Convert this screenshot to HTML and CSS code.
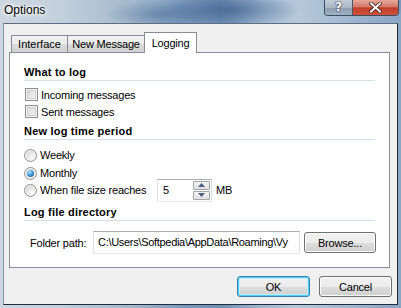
FILE: index.html
```html
<!DOCTYPE html>
<html>
<head>
<meta charset="utf-8">
<link rel="stylesheet" href="styles.css">
</head>
<body>
<div class="window">
  <div class="titlebar">
    <div class="title">Options</div>
    <div class="caption-btns">
      <div class="cbtn help">?</div>
      <div class="cbtn close">
        <svg width="13" height="11" viewBox="0 0 13 11"><path d="M2 1.5 L11 9.5 M11 1.5 L2 9.5" stroke="#3b1a1a" stroke-width="3.6" stroke-linecap="square"/><path d="M2 1.5 L11 9.5 M11 1.5 L2 9.5" stroke="#ffffff" stroke-width="2" stroke-linecap="square"/></svg>
      </div>
    </div>
  </div>
  <div class="client">
    <div class="tabs">
      <div class="tab tab-interface">Interface</div>
      <div class="tab tab-message">New Message</div>
      <div class="tab tab-logging selected">Logging</div>
    </div>
    <div class="panel">
      <div class="header h1">What to log</div>
      <div class="row chk-row first"><span class="checkbox"></span><span>Incoming messages</span></div>
      <div class="row chk-row"><span class="checkbox"></span><span>Sent messages</span></div>
      <div class="header h2">New log time period</div>
      <div class="row radio-row weekly"><span class="radio"></span><span>Weekly</span></div>
      <div class="row radio-row"><span class="radio on"></span><span>Monthly</span></div>
      <div class="row radio-row size"><span class="radio"></span><span class="size-label">When file size reaches</span>
        <div class="spin">
          <div class="spin-value">5</div>
          <div class="spin-btns">
            <div class="sbtn"><svg width="7" height="4" viewBox="0 0 7 4"><path d="M0 4 L3.5 0 L7 4 Z" fill="#4a5f85"/></svg></div>
            <div class="sbtn"><svg width="7" height="4" viewBox="0 0 7 4"><path d="M0 0 L3.5 4 L7 0 Z" fill="#4a5f85"/></svg></div>
          </div>
        </div>
        <span class="mb">MB</span>
      </div>
      <div class="header h3">Log file directory</div>
      <div class="folder-row">
        <span class="folder-label">Folder path:</span>
        <div class="textbox"><span class="path">C:\Users\Softpedia\AppData\Roaming\Vy</span></div>
        <div class="button browse">Browse...</div>
      </div>
    </div>
    <div class="footer">
      <div class="button default">OK</div>
      <div class="button">Cancel</div>
    </div>
  </div>
</div>
</body>
</html>
```
FILE: styles.css
```css
* { box-sizing: border-box; }
html, body { margin: 0; padding: 0; }
body {
  width: 401px;
  height: 308px;
  overflow: hidden;
  font-family: "Liberation Sans", Arial, sans-serif;
  font-size: 11px;
  letter-spacing: -0.2px;
  color: #000;
}
.window {
  height: 308px;
  display: flex;
  flex-direction: column;
  padding: 0 3px 3px 3px;
  background:
    radial-gradient(ellipse 70px 16px at 230px 10px, rgba(50,85,135,0.6), rgba(50,85,135,0) 100%),
    radial-gradient(ellipse 55px 13px at 160px 14px, rgba(70,105,150,0.5), rgba(70,105,150,0) 100%),
    radial-gradient(ellipse 50px 12px at 370px 4px, rgba(60,95,145,0.5), rgba(60,95,145,0) 100%),
    linear-gradient(90deg, #cbd6e0 0%, #c3d0dc 15%, #a3b8cc 33%, #7e9bbd 45%, #6f8eb3 55%, #9fb7cf 65%, #b6c9da 74%, #a9bfd5 82%, #88a5c4 100%);
}
.titlebar {
  height: 23px;
  flex: none;
  display: flex;
  align-items: flex-start;
  justify-content: space-between;
  margin: 0 -3px;
  padding: 0 2px 0 4px;
}
.title {
  font-size: 12px;
  letter-spacing: 0;
  line-height: 20px;
  color: #000;
  text-shadow: 0 0 6px #fff, 0 0 4px #fff, 0 0 2px #fff;
}
.caption-btns {
  display: flex;
  height: 16px;
  border: 1px solid #3c4e63;
  border-top: none;
  border-radius: 0 0 4px 4px;
  overflow: hidden;
}
.cbtn {
  height: 15px;
  display: flex;
  align-items: center;
  justify-content: center;
}
.help {
  width: 28px;
  border-right: 1px solid #4a5a6c;
  background: linear-gradient(#c3cdd8 0%, #aab7c5 50%, #8c9cae 51%, #9eb0c3 100%);
  color: #fff;
  font-family: "DejaVu Sans", sans-serif;
  font-weight: bold;
  font-size: 12px;
  letter-spacing: 0;
  line-height: 15px;
  text-shadow: 0 0 2px #223, 0 0 1px #223;
}
.close {
  width: 45px;
  background: linear-gradient(#e5a89a 0%, #d47a68 45%, #c0412b 52%, #d0503a 100%);
}
.client {
  flex: 1;
  display: flex;
  flex-direction: column;
  background: #f0f0f0;
  border-left: 1px solid #8797a8;
  border-top: 1px solid #5f6f82;
  border-right: 1px solid #1f2d3e;
  border-bottom: 1px solid #1f2d3e;
  padding: 8px 7px 0 5px;
}
.tabs {
  display: flex;
  align-items: flex-end;
  height: 20px;
  padding-left: 2px;
}
.tab {
  height: 17px;
  line-height: 16px;
  text-align: center;
  border: 1px solid #898c95;
  border-bottom: none;
  margin-right: -1px;
  background: linear-gradient(#f2f2f2 0%, #ebebeb 50%, #dddddd 51%, #cfcfcf 100%);
}
.tab-interface { width: 57px; letter-spacing: 0; }
.tab-message { width: 78px; }
.tab-logging { width: 53px; }
.tab.selected {
  height: 21px;
  line-height: 20px;
  margin-bottom: -1px;
  background: #fff;
  position: relative;
  z-index: 1;
}
.panel {
  height: 216px;
  flex: none;
  background: #fff;
  border: 1px solid #898c95;
  padding: 11px 14px 0 14px;
  display: flex;
  flex-direction: column;
}
.header {
  font-weight: bold;
  letter-spacing: 0.2px;
  line-height: 16px;
  height: 17px;
  border-bottom: 1px solid #d5dfe5;
  color: #000;
}
.h2 { margin-top: 3px; }
.h3 { margin-top: 6px; }
.row {
  display: flex;
  align-items: center;
}
.chk-row { height: 17px; }
.chk-row.first { margin-top: 5px; }
.checkbox {
  width: 13px;
  height: 13px;
  flex: none;
  margin: 0 3px 0 1px;
  border: 1px solid #8e8f8f;
  background: linear-gradient(135deg, #d3d3d3 0%, #e6e6e6 50%, #fbfbfb 100%);
  box-shadow: inset 0 0 0 1px #f4f4f4, inset 0 0 0 2px #d0d0d0;
}
.radio-row { height: 18px; }
.radio-row.weekly { margin-top: 6px; }
.radio-row.size { height: 16px; }
.radio {
  width: 13px;
  height: 13px;
  flex: none;
  margin: 0 3px 0 0;
  border-radius: 50%;
  border: 1px solid #8e8f8f;
  background: radial-gradient(circle at 65% 70%, #fdfdfd 0%, #e4e4e4 45%, #cfcfcf 100%);
  box-shadow: inset 0 0 0 1px #f6f6f6;
  display: flex;
  align-items: center;
  justify-content: center;
}
.radio.on::after {
  content: "";
  width: 7px;
  height: 7px;
  border-radius: 50%;
  background: radial-gradient(circle at 35% 30%, #bfe4fb 0%, #56aee8 35%, #1c5d9e 80%, #104480 100%);
}
.size-label { width: 117px; flex: none; }
.spin {
  width: 55px;
  height: 23px;
  flex: none;
  display: flex;
  align-items: center;
  justify-content: space-between;
  border: 1px solid #abadb3;
  border-left-color: #e2e3ea;
  border-right-color: #dbdfe6;
  border-bottom-color: #e3e9ef;
  background: #fff;
  padding: 0 1px 0 5px;
}
.spin-value { line-height: 14px; }
.spin-btns {
  display: flex;
  flex-direction: column;
  gap: 1px;
}
.sbtn {
  width: 17px;
  height: 9px;
  border: 1px solid #a2a5aa;
  border-radius: 1px;
  background: linear-gradient(#f4f4f4, #e0e0e0);
  display: flex;
  align-items: center;
  justify-content: center;
}
.mb { margin-left: 4px; }
.folder-row {
  display: flex;
  align-items: center;
  height: 23px;
  margin-top: 10px;
}
.folder-label {
  width: 69px;
  flex: none;
  padding-left: 6px;
}
.textbox {
  width: 207px;
  height: 23px;
  flex: none;
  border: 1px solid #abadb3;
  border-left-color: #e2e3ea;
  border-right-color: #dbdfe6;
  border-bottom-color: #e3e9ef;
  padding: 0 2px 0 4px;
  line-height: 21px;
  white-space: nowrap;
  overflow: hidden;
}
.path { letter-spacing: -0.3px; }
.button {
  height: 21px;
  width: 73px;
  flex: none;
  display: flex;
  align-items: center;
  justify-content: center;
  border: 1px solid #707070;
  border-radius: 3px;
  background: linear-gradient(#f2f2f2 0%, #ebebeb 50%, #dddddd 51%, #cfcfcf 100%);
  box-shadow: inset 0 0 0 1px #fcfcfc;
}
.browse {
  width: 72px;
  margin-left: 4px;
}
.button.default {
  border-color: #3c7fb1;
  box-shadow: inset 0 0 0 1px #48d2f8, inset 0 0 0 2px #c8ecfb;
}
.footer {
  display: flex;
  justify-content: flex-end;
  gap: 9px;
  margin-top: 8px;
  margin-right: -2px;
}
```
